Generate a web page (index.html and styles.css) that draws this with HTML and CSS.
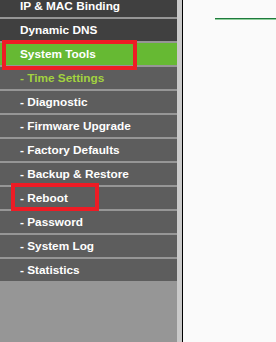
FILE: index.html
```html
<!DOCTYPE html>
<html lang="en">

<head>
    <meta charset="UTF-8">
    <meta name="viewport" content="width=device-width, initial-scale=1.0">
    <link rel="stylesheet" href="styles.css">
</head>

<body>
    <div class="page">
        <div class="sidebar">
            <ul class="menu">
                <li class="item top">IP &amp; MAC Binding</li>
                <li class="item top">Dynamic DNS</li>
                <li class="item active">System Tools</li>
                <li class="item sub current">- Time Settings</li>
                <li class="item sub">- Diagnostic</li>
                <li class="item sub">- Firmware Upgrade</li>
                <li class="item sub">- Factory Defaults</li>
                <li class="item sub">- Backup &amp; Restore</li>
                <li class="item sub">- Reboot</li>
                <li class="item sub">- Password</li>
                <li class="item sub">- System Log</li>
                <li class="item sub">- Statistics</li>
            </ul>
            <!-- annotation boxes -->
            <div class="mark mark-tools"></div>
            <div class="mark mark-reboot"></div>
        </div>
        <div class="main">
            <div class="title-line"></div>
        </div>
    </div>
</body>

</html>
```

FILE: styles.css
```css
html,
body {
    margin: 0;
    padding: 0;
    height: 100%;
}

body {
    font-family: "Liberation Sans", Arial, sans-serif;
    background-color: #fafafa;
}

.page {
    display: flex;
    height: 342px;
}

.sidebar {
    position: relative;
    width: 177px;
    flex-shrink: 0;
    background-color: #969696;
    border-right: 5px solid #c9c9c9;
    overflow: hidden;
}

.menu {
    list-style: none;
    margin: -5px 0 0 0;
    padding: 0;
}

.item {
    height: 22px;
    line-height: 22px;
    margin-bottom: 2px;
    padding-left: 20px;
    font-size: 11.8px;
    font-weight: bold;
    color: #fff;
    background-color: #5d5d5d;
    white-space: nowrap;
}

.item.top {
    background-color: #404040;
}

.item.active {
    background-color: #66b933;
}

.item.current {
    color: #a2d23f;
}

.mark {
    position: absolute;
    border: 4px solid #ee1c25;
}

.mark-tools {
    left: 2px;
    top: 40px;
    width: 127px;
    height: 22px;
}

.mark-reboot {
    left: 11px;
    top: 183px;
    width: 80px;
    height: 20px;
}

.main {
    flex: 1;
    border-left: 1px solid #000;
    padding: 18px 0 0 32px;
}

.title-line {
    border-top: 1px solid #1f7a3d;
    border-bottom: 1px solid #8fcf9c;
}
```
